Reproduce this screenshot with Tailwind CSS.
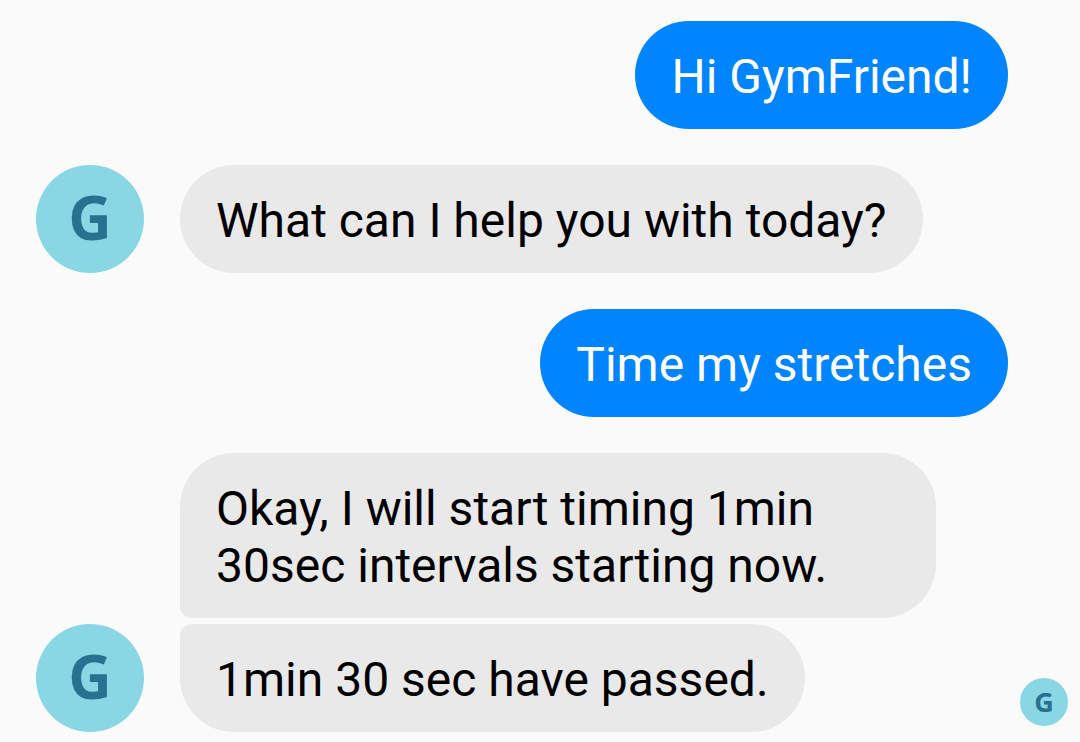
<!DOCTYPE html>
<html lang="en">
<head>
<meta charset="utf-8">
<title>GymFriend chat</title>
<script src="https://cdn.jsdelivr.net/npm/@tailwindcss/browser@4"></script>
</head>
<body class="bg-[#fafafa] font-['Roboto',sans-serif] text-[48px] leading-[57px] text-black">
<main class="flex flex-col pl-9 pr-3 pt-[21px] pb-[10px]">
  <div class="mr-[60px] self-end rounded-[54px] bg-[#0084ff] px-9 pt-[27px] pb-6 text-white">Hi GymFriend!</div>
  <div class="mt-9 flex items-end gap-9">
    <div class="flex size-[108px] shrink-0 items-center justify-center rounded-full bg-[#89d7e4] pb-1 font-['Open_Sans',sans-serif] text-[60px] font-bold text-[#28728f]">G</div>
    <div class="rounded-[54px] bg-[#e9e9e9] px-9 pt-[27px] pb-6">What can I help you with today?</div>
  </div>
  <div class="mr-[60px] mt-9 self-end rounded-[54px] bg-[#0084ff] px-9 pt-[27px] pb-6 text-white">Time my stretches</div>
  <div class="ml-36 mt-9 max-w-[756px] rounded-[54px] rounded-bl-[12px] bg-[#e9e9e9] px-9 pt-[27px] pb-6">Okay, I will start timing 1min 30sec intervals starting now.</div>
  <div class="mt-1.5 flex items-end gap-9">
    <div class="flex size-[108px] shrink-0 items-center justify-center rounded-full bg-[#89d7e4] pb-1 font-['Open_Sans',sans-serif] text-[60px] font-bold text-[#28728f]">G</div>
    <div class="rounded-[54px] rounded-tl-[12px] bg-[#e9e9e9] px-9 pt-[27px] pb-6">1min 30 sec have passed.</div>
    <div class="mb-[6px] ml-auto flex size-12 shrink-0 items-center justify-center rounded-full bg-[#89d7e4] pb-0.5 font-['Open_Sans',sans-serif] text-[27px] font-bold text-[#28728f]">G</div>
  </div>
</main>
</body>
</html>
